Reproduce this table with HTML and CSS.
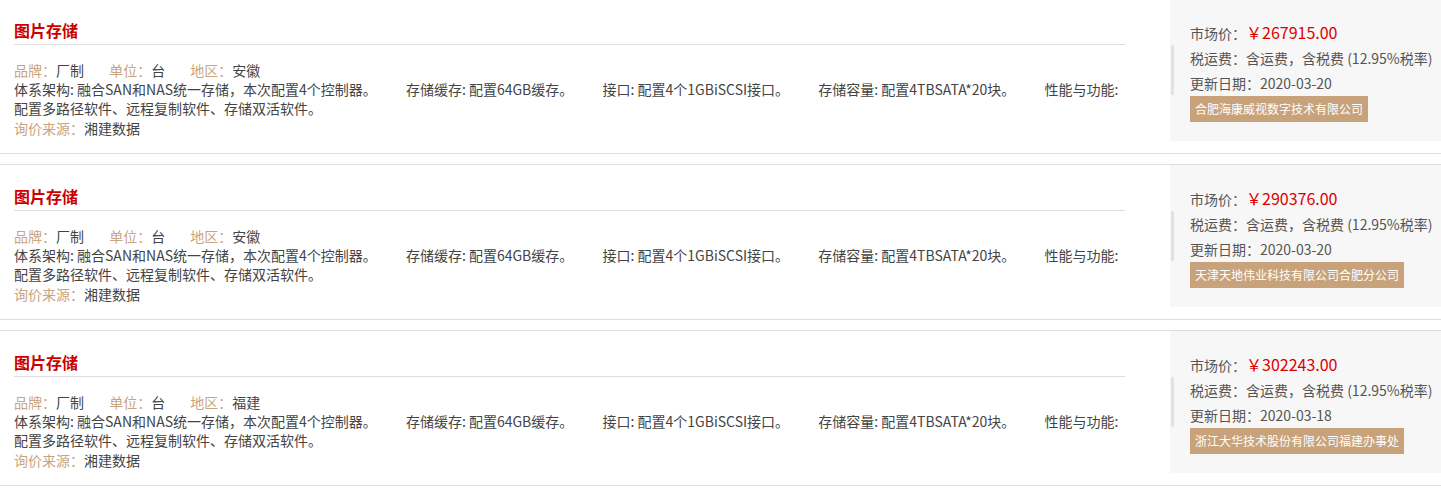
FILE: index.html
```html
<!DOCTYPE html>
<html lang="zh-CN">
<head>
    <meta charset="UTF-8">
    <meta name="viewport" content="width=device-width, initial-scale=1.0">
    <title>图片存储 - 询价结果</title>
    <link rel="stylesheet" href="styles.css">
</head>
<body>
    <div class="list">
        <div class="item">
            <div class="item-main">
                <h3 class="title">图片存储</h3>
                <p class="attrs">
                    <span><em class="label">品牌：</em>厂制</span>
                    <span><em class="label">单位：</em>台</span>
                    <span><em class="label">地区：</em>安徽</span>
                </p>
                <p class="spec">
                    <span>体系架构: 融合SAN和NAS统一存储，本次配置4个控制器。</span>
                    <span>存储缓存: 配置64GB缓存。</span>
                    <span>接口: 配置4个1GBiSCSI接口。</span>
                    <span>存储容量: 配置4TBSATA*20块。</span>
                    <span>性能与功能: 配置多路径软件、远程复制软件、存储双活软件。</span>
                </p>
                <p class="source"><em class="label">询价来源：</em>湘建数据</p>
            </div>
            <div class="side">
                <p>市场价：<span class="price">￥267915.00</span></p>
                <p>税运费：含运费，含税费 (12.95%税率)</p>
                <p>更新日期：2020-03-20</p>
                <span class="tag">合肥海康威视数字技术有限公司</span>
            </div>
        </div>

        <div class="item">
            <div class="item-main">
                <h3 class="title">图片存储</h3>
                <p class="attrs">
                    <span><em class="label">品牌：</em>厂制</span>
                    <span><em class="label">单位：</em>台</span>
                    <span><em class="label">地区：</em>安徽</span>
                </p>
                <p class="spec">
                    <span>体系架构: 融合SAN和NAS统一存储，本次配置4个控制器。</span>
                    <span>存储缓存: 配置64GB缓存。</span>
                    <span>接口: 配置4个1GBiSCSI接口。</span>
                    <span>存储容量: 配置4TBSATA*20块。</span>
                    <span>性能与功能: 配置多路径软件、远程复制软件、存储双活软件。</span>
                </p>
                <p class="source"><em class="label">询价来源：</em>湘建数据</p>
            </div>
            <div class="side">
                <p>市场价：<span class="price">￥290376.00</span></p>
                <p>税运费：含运费，含税费 (12.95%税率)</p>
                <p>更新日期：2020-03-20</p>
                <span class="tag">天津天地伟业科技有限公司合肥分公司</span>
            </div>
        </div>

        <div class="item">
            <div class="item-main">
                <h3 class="title">图片存储</h3>
                <p class="attrs">
                    <span><em class="label">品牌：</em>厂制</span>
                    <span><em class="label">单位：</em>台</span>
                    <span><em class="label">地区：</em>福建</span>
                </p>
                <p class="spec">
                    <span>体系架构: 融合SAN和NAS统一存储，本次配置4个控制器。</span>
                    <span>存储缓存: 配置64GB缓存。</span>
                    <span>接口: 配置4个1GBiSCSI接口。</span>
                    <span>存储容量: 配置4TBSATA*20块。</span>
                    <span>性能与功能: 配置多路径软件、远程复制软件、存储双活软件。</span>
                </p>
                <p class="source"><em class="label">询价来源：</em>湘建数据</p>
            </div>
            <div class="side">
                <p>市场价：<span class="price">￥302243.00</span></p>
                <p>税运费：含运费，含税费 (12.95%税率)</p>
                <p>更新日期：2020-03-18</p>
                <span class="tag">浙江大华技术股份有限公司福建办事处</span>
            </div>
        </div>
    </div>
</body>
</html>
```

FILE: styles.css
```css
* {
    margin: 0;
    padding: 0;
    box-sizing: border-box;
    font-family: "Microsoft YaHei", "Noto Sans CJK SC", sans-serif;
}
body {
    background: #fff;
    color: #444;
    font-size: 14px;
    margin-top: -2px;
}
em {
    font-style: normal;
}
.item {
    display: flex;
    border-top: 1px solid #ddd;
    border-bottom: 1px solid #ddd;
    padding-bottom: 12px;
    margin-bottom: 10px;
}
.item-main {
    flex: 1;
    padding: 0 45px 0 14px;
}
.title {
    padding-top: 17px;
    line-height: 28px;
    font-size: 16px;
    font-weight: bold;
    color: #cc0000;
    border-bottom: 1px solid #ddd;
}
.attrs {
    margin-top: 15px;
    line-height: 20px;
}
.attrs span {
    margin-right: 22px;
}
.label {
    color: #c9a47f;
}
.spec {
    line-height: 19px;
}
.spec span {
    margin-right: 26px;
}
.source {
    line-height: 20px;
}
.side {
    position: relative;
    width: 271px;
    height: 142px;
    background: #f7f7f7;
    padding: 21px 0 0 20px;
    color: #555;
}
.side::before {
    content: "";
    position: absolute;
    left: 1px;
    top: 46px;
    width: 3px;
    height: 50px;
    border-radius: 2px;
    background: #e2e2e2;
}
.side p {
    line-height: 25px;
    white-space: nowrap;
}
.price {
    color: #dd0000;
    font-size: 16px;
}
.tag {
    display: inline-block;
    background: #c8a27a;
    color: #fff;
    font-size: 12px;
    line-height: 26px;
    padding: 0 5px;
}
```
